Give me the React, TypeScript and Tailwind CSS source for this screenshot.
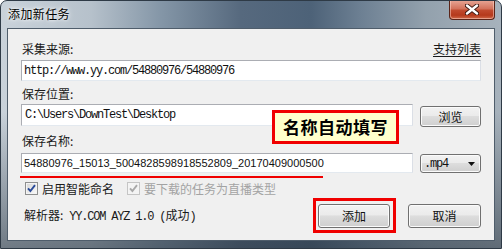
const cjk = "font-['Noto_Sans_CJK_SC','Microsoft_YaHei',sans-serif]";
const mono = "font-['Liberation_Mono','Noto_Sans_CJK_SC',monospace] tracking-[-1.2px]";

const face =
  "flex items-center rounded-[3px] border border-[#707070] bg-[linear-gradient(180deg,#f2f2f2_0%,#ebebeb_45%,#dddddd_50%,#cfcfcf_100%)] shadow-[inset_0_0_0_1px_#fbfbfb] text-[12px] leading-[16px] text-[#111]";
const btn = `${face} justify-center`;

const field =
  "flex items-center border border-[#abadb3] border-r-[#dbdfe6] border-b-[#e3e9ef] bg-white pl-[2px] text-[#111]";

function Check({ disabled }: { disabled?: boolean }) {
  return (
    <span
      className={`flex h-[13px] w-[13px] shrink-0 items-center justify-center border ${
        disabled
          ? "border-[#c5c5c5] bg-[#f4f4f4]"
          : "border-[#8e8f8f] bg-[linear-gradient(135deg,#d6d6d6,#fbfbfb)] shadow-[inset_0_0_0_1px_#f4f4f4]"
      }`}
    >
      <svg width="11" height="11" viewBox="0 0 11 11">
        <path
          d="M2 5.3 L4.4 8 L9 2.2"
          fill="none"
          stroke={disabled ? "#a9a9a9" : "#2b4c9a"}
          strokeWidth="1.9"
        />
      </svg>
    </span>
  );
}

export default function App() {
  return (
    <div
      className={`${cjk} flex h-[249px] w-[502px] flex-col overflow-hidden rounded-t-[7px] border border-[#2e3a46] bg-[linear-gradient(180deg,rgba(0,0,0,0)_45%,rgba(38,50,62,0.55)_100%),linear-gradient(90deg,#c9d2da_0%,#b6c1cb_18%,#8496a7_32%,#56697e_48%,#4d6278_62%,#6d8093_72%,#93a1ad_85%,#a7b2bc_100%)]`}
    >
      {/* title bar */}
      <div className="flex h-[27px] items-start">
        <span className="ml-[7px] mt-[5px] text-[12px] leading-[16px] tracking-[0.4px] text-black [text-shadow:0_0_6px_#fff,0_0_3px_#fff]">
          添加新任务
        </span>
        <button className="-mt-px ml-auto mr-[6px] flex h-[20px] w-[46px] items-center justify-center rounded-b-[4px] border border-t-0 border-[#5a2418] bg-[linear-gradient(180deg,#e8a898_0%,#d3735d_45%,#c04a2e_55%,#b5391c_80%,#d06a4a_100%)] shadow-[inset_0_0_0_1px_rgba(255,220,210,0.5)]">
          <svg width="14" height="11" viewBox="0 0 14 11">
            <path
              d="M2 1.5 L12 9.5 M12 1.5 L2 9.5"
              stroke="#3a1610"
              strokeWidth="4.2"
              strokeLinecap="round"
            />
            <path d="M2 1.5 L12 9.5 M12 1.5 L2 9.5" stroke="#fff" strokeWidth="2.4" strokeLinecap="round" />
          </svg>
        </button>
      </div>

      {/* client area */}
      <div className="relative mx-[6px] flex h-[213px] flex-col border border-[#4f5d6b] bg-[#f0f0f0] px-[13px] pt-[12px]">
        <div className="flex h-[16px] items-center justify-between text-[12px] leading-[16px] text-[#1a1a1a]">
          <span className="ml-px">采集来源:</span>
          <span className="underline underline-offset-[2px]">支持列表</span>
        </div>

        <div className={`${field} mt-[3px] h-[21px] text-[12px] ${mono}`}>
          http://www.yy.com/54880976/54880976
        </div>

        <div className="mt-[5px] h-[16px] text-[12px] leading-[16px] text-[#1a1a1a]">
          <span className="ml-px">保存位置:</span>
        </div>

        <div className="mt-[2px] flex items-start gap-[7px]">
          <div className={`${field} h-[22px] flex-1 pl-[3px] text-[12px] ${mono}`}>
            C:\Users\DownTest\Desktop
          </div>
          <button className={`${btn} mt-[2px] h-[21px] w-[61px]`}>浏览</button>
        </div>

        <div className="mt-[6px] h-[16px] text-[12px] leading-[16px] text-[#1a1a1a]">
          <span className="ml-px">保存名称:</span>
        </div>

        <div className="mt-[4px] flex items-start gap-[7px]">
          <div className={`${field} h-[20px] flex-1 font-['Liberation_Sans',Arial,sans-serif] text-[11px]`}>
            54880976_15013_5004828598918552809_20170409000500
          </div>
          <div className={`${face} mt-px h-[19px] w-[61px] justify-between pl-[3px] pr-[5px]`}>
            <span className={`${mono} text-[12px]`}>.mp4</span>
            <svg width="7" height="4" viewBox="0 0 7 4">
              <path d="M0 0 H7 L3.5 4 Z" fill="#111" />
            </svg>
          </div>
        </div>

        <div className="-ml-px mt-[3px] h-[2px] w-[303px] bg-[#f00000]" />

        <div className="mt-[4px] flex h-[13px] items-center text-[12px] leading-[16px]">
          <span className="ml-[4px]">
            <Check />
          </span>
          <span className="ml-[4px] text-[#1a1a1a]">启用智能命名</span>
          <span className="ml-[13px]">
            <Check disabled />
          </span>
          <span className="ml-[4px] text-[#a3a3a3]">要下载的任务为直播类型</span>
        </div>

        <div className="mt-[3px] flex items-center">
          <span className="ml-[3px] text-[12px] leading-[16px] text-[#1a1a1a]">
            解析器:<span className={mono}> YY.COM AYZ 1.0 (</span>成功<span className={mono}>)</span>
          </span>
          <div className="ml-auto border-[3px] border-[#f00000] p-[2px] pl-[2px] pr-[3px] pt-[3px]">
            <button className={`${btn} h-[24px] w-[72px] border-[#3c8fc0] bg-[linear-gradient(180deg,#eef3f6_0%,#e3e8eb_45%,#d6dbde_50%,#cbd0d3_100%)] shadow-[inset_0_0_0_1px_#6fe0f8]`}>
              添加
            </button>
          </div>
          <button className={`${btn} ml-[12px] h-[24px] w-[73px]`}>取消</button>
        </div>

        {/* callout annotation */}
        <div className="absolute left-[264px] top-[81px] flex h-[34px] w-[127px] items-center justify-center border-[3px] border-[#f00000] bg-[#ffffcc] text-[17px] font-bold leading-[20px] tracking-[0.5px] text-black">
          名称自动填写
        </div>
      </div>
    </div>
  );
}
